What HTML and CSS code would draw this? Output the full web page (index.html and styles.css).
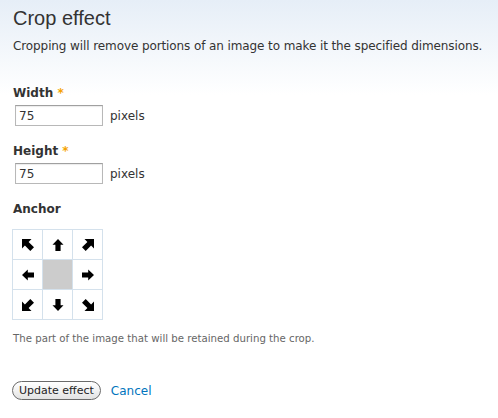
FILE: index.html
```html
<!DOCTYPE html>
<html>
<head>
<meta charset="utf-8">
<title>Crop effect</title>
<link rel="stylesheet" href="styles.css">
</head>
<body>
<div class="page">
  <h1 class="title">Crop effect</h1>
  <p class="intro">Cropping will remove portions of an image to make it the specified dimensions.</p>

  <div class="field">
    <label class="label" for="w">Width <span class="req">*</span></label>
    <div class="row"><input id="w" class="text" type="text" value="75"><span class="suffix">pixels</span></div>
  </div>

  <div class="field">
    <label class="label" for="h">Height <span class="req">*</span></label>
    <div class="row"><input id="h" class="text" type="text" value="75"><span class="suffix">pixels</span></div>
  </div>

  <div class="field anchor-field">
    <div class="label">Anchor</div>
    <div class="anchor">
      <div class="cell"><svg class="arrow" viewBox="0 0 12 12" width="12" height="12"><polygon points="0,0 9.5,0 6.6,2.9 12,8.3 8.3,12 2.9,6.6 0,9.5"/></svg></div>
      <div class="cell"><svg class="arrow" viewBox="0 0 12 12" width="12" height="12"><polygon points="6,0 11.5,5.8 8.6,5.8 8.6,12 3.4,12 3.4,5.8 0.5,5.8"/></svg></div>
      <div class="cell"><svg class="arrow" viewBox="0 0 12 12" width="12" height="12"><polygon transform="rotate(90 6 6)" points="0,0 9.5,0 6.6,2.9 12,8.3 8.3,12 2.9,6.6 0,9.5"/></svg></div>
      <div class="cell"><svg class="arrow" viewBox="0 0 12 12" width="12" height="12"><polygon transform="rotate(-90 6 6)" points="6,0 11.5,5.8 8.6,5.8 8.6,12 3.4,12 3.4,5.8 0.5,5.8"/></svg></div>
      <div class="cell selected"></div>
      <div class="cell"><svg class="arrow" viewBox="0 0 12 12" width="12" height="12"><polygon transform="rotate(90 6 6)" points="6,0 11.5,5.8 8.6,5.8 8.6,12 3.4,12 3.4,5.8 0.5,5.8"/></svg></div>
      <div class="cell"><svg class="arrow" viewBox="0 0 12 12" width="12" height="12"><polygon transform="rotate(-90 6 6)" points="0,0 9.5,0 6.6,2.9 12,8.3 8.3,12 2.9,6.6 0,9.5"/></svg></div>
      <div class="cell"><svg class="arrow" viewBox="0 0 12 12" width="12" height="12"><polygon transform="rotate(180 6 6)" points="6,0 11.5,5.8 8.6,5.8 8.6,12 3.4,12 3.4,5.8 0.5,5.8"/></svg></div>
      <div class="cell"><svg class="arrow" viewBox="0 0 12 12" width="12" height="12"><polygon transform="rotate(180 6 6)" points="0,0 9.5,0 6.6,2.9 12,8.3 8.3,12 2.9,6.6 0,9.5"/></svg></div>
    </div>
    <div class="desc">The part of the image that will be retained during the crop.</div>
  </div>

  <div class="actions">
    <button class="btn" type="button">Update effect</button>
    <a class="cancel" href="#">Cancel</a>
  </div>
</div>
</body>
</html>
```

FILE: styles.css
```css
html, body {
  margin: 0;
  padding: 0;
}
body {
  background: linear-gradient(to bottom, #e6eef7 0px, #ffffff 95px) no-repeat;
  background-color: #fff;
  min-height: 418px;
  font-family: "DejaVu Sans", Verdana, sans-serif;
  color: #333;
}
.page {
  padding: 6px 13px 0 13px;
}
.title {
  margin: 0;
  font-family: "Liberation Sans", Arial, sans-serif;
  font-weight: normal;
  font-size: 20px;
  line-height: 24px;
  color: #333;
}
.intro {
  margin: 7px 0 0 0;
  font-size: 12px;
  line-height: 18px;
  letter-spacing: -0.1px;
  white-space: nowrap;
  color: #333;
}
.field {
  margin-top: 16px;
}
.field:first-of-type {
  margin-top: 29px;
}
.label {
  display: block;
  font-weight: bold;
  font-size: 12px;
  line-height: 18px;
  color: #333;
}
.req {
  color: #f5a300;
}
.row {
  display: flex;
  align-items: center;
  margin-top: 3px;
}
.text {
  box-sizing: border-box;
  width: 88px;
  height: 21px;
  margin: 0 0 0 2px;
  padding: 1px 3px 0 3px;
  border: 1px solid #b8b8b8;
  border-top-color: #a0a0a0;
  border-radius: 0;
  font-family: "DejaVu Sans", Verdana, sans-serif;
  font-size: 12px;
  color: #333;
  background: #fff;
  box-shadow: inset 0 1px 1px rgba(0,0,0,0.08);
}
.suffix {
  margin-left: 7px;
  font-size: 12px;
  color: #333;
}
.anchor {
  display: grid;
  grid-template-columns: repeat(3, 29px);
  grid-auto-rows: 29px;
  gap: 1px;
  padding: 1px;
  width: max-content;
  margin: 11px 0 0 -1px;
  background: #d4e1ec;
}
.cell {
  background: #fff;
  display: flex;
  align-items: center;
  justify-content: center;
}
.cell.selected {
  background: #cccccc;
}
.arrow {
  display: block;
  fill: #000;
}
.desc {
  margin-top: 11px;
  font-size: 10.2px;
  line-height: 16px;
  color: #666;
}
.actions {
  margin-top: 34px;
  display: flex;
  align-items: center;
}
.btn {
  box-sizing: border-box;
  height: 19px;
  margin: 0 0 0 -1px;
  padding: 0 6px;
  border: 1px solid #6a6a6a;
  border-radius: 10px;
  background: linear-gradient(to bottom, #ffffff 0%, #f2f2f2 50%, #e2e2e2 100%);
  font-family: "DejaVu Sans", Verdana, sans-serif;
  font-size: 11px;
  line-height: 17px;
  color: #222;
}
.cancel {
  margin-left: 10px;
  font-size: 12px;
  color: #0074bd;
  text-decoration: none;
}
```
